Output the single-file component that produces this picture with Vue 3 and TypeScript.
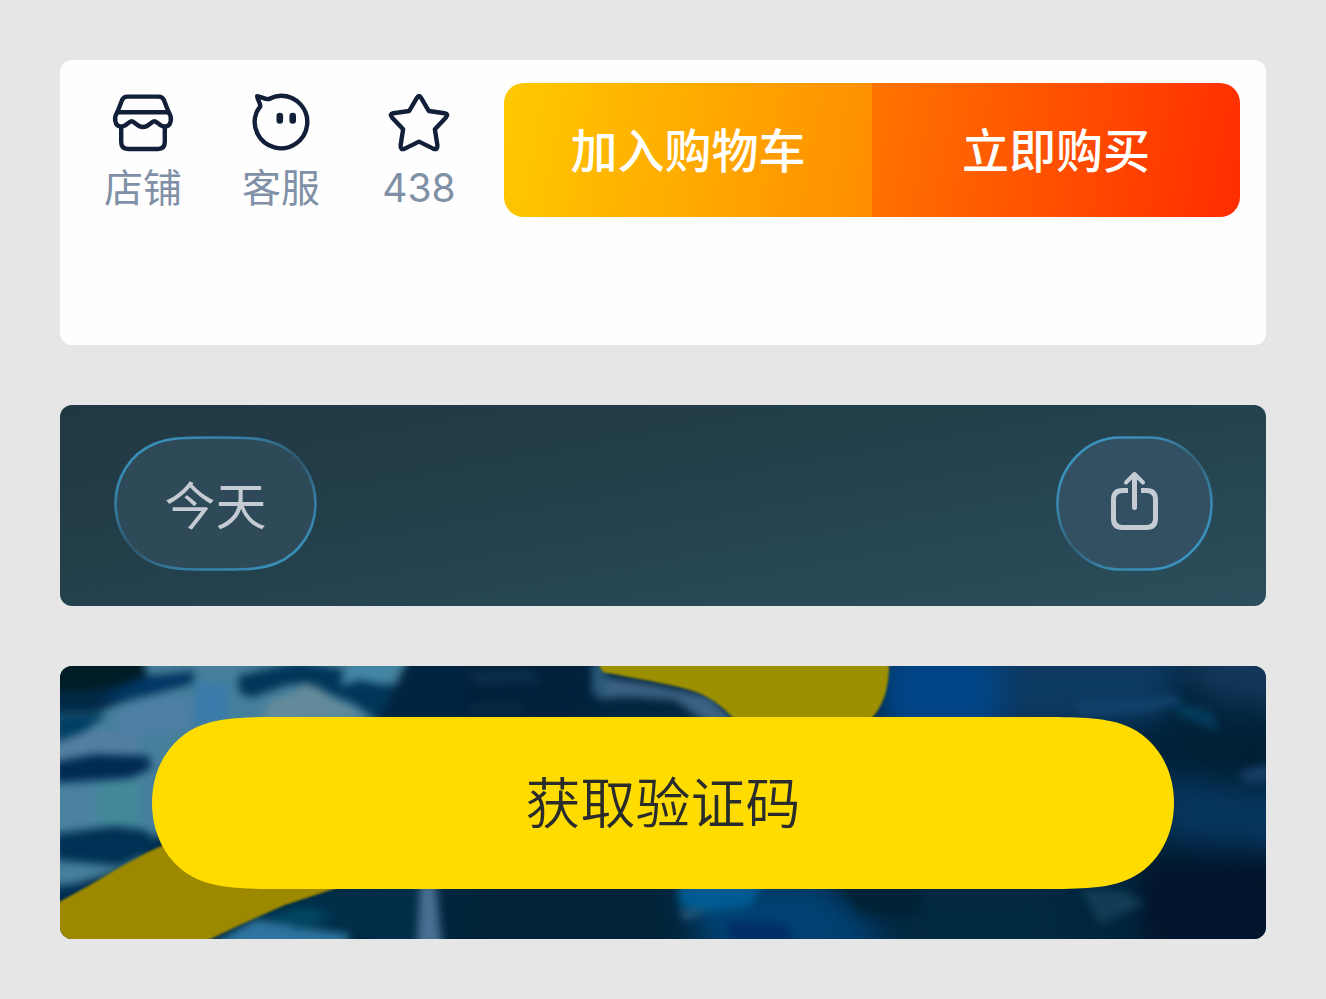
<script setup lang="ts">
import { ref } from 'vue'

type IconName = 'shop' | 'service' | 'favorite'

interface Shortcut {
  icon: IconName
  label: string
}

const shortcuts = ref<Shortcut[]>([
  { icon: 'shop', label: '店铺' },
  { icon: 'service', label: '客服' },
  { icon: 'favorite', label: '438' },
])
</script>

<template>
  <main class="page">
    <section class="panel shop-bar">
      <nav class="shortcuts">
        <button v-for="item in shortcuts" :key="item.icon" type="button" class="shortcut">
          <svg class="shortcut-icon" viewBox="0 0 64 60" aria-hidden="true">
            <g v-if="item.icon === 'shop'">
              <path d="M6.3 19.3 11 7.2Q12.5 3.6 16.4 3.6H47.6Q51.5 3.6 53 7.2L57.7 19.3Z" />
              <path d="M6.3 19.3C2.8 24 3.2 33.6 10.2 33.6C15.5 33.6 17.5 28.2 20.7 28.2C24 28.2 25.5 34 32 34C38.5 34 40 28.2 43.3 28.2C46.5 28.2 48.5 33.6 53.8 33.6C60.8 33.6 61.2 24 57.7 19.3" />
              <path d="M10.2 33.6V49Q10.2 56 17.2 56H46.8Q53.8 56 53.8 49V33.6" />
            </g>
            <g v-else-if="item.icon === 'service'">
              <path d="M20 6C25 3.2 28 2.7 32 2.7A26.3 26.3 0 1 1 7.6 19.2C8.8 16 11 14.5 11.3 13.2C11.3 9.5 8.6 7.5 8.2 3.2C12 3.5 16.2 6.8 20 6Z" />
              <rect class="solid" x="27.5" y="19.8" width="6.6" height="11" rx="3.3" />
              <rect class="solid" x="40.4" y="19.8" width="6.6" height="11" rx="3.3" />
            </g>
            <path
              v-else
              d="M29.9 4.8Q32 1.2 34.1 4.8L41.8 18L57.6 20.2Q62 21 59 24.4L47.9 36.3L50.4 52.3Q50.8 57.4 46.2 55.6L32 48.6L17.8 55.6Q13.2 57.4 13.6 52.3L16.1 36.3L5 24.4Q2 21 6.4 20.2L22.2 18Z"
            />
          </svg>
          <span class="shortcut-label">{{ item.label }}</span>
        </button>
      </nav>
      <div class="purchase">
        <button type="button" class="action add">加入购物车</button>
        <button type="button" class="action buy">立即购买</button>
      </div>
    </section>

    <section class="panel glass-bar">
      <button type="button" class="glass today">
        <svg class="glass-shape" viewBox="0 0 203 135" aria-hidden="true">
          <defs>
            <linearGradient id="rim-today" x1="0.1" y1="0" x2="0.9" y2="1">
              <stop offset="0" stop-color="#3a94bf" />
              <stop offset="0.28" stop-color="#347ca2" />
              <stop offset="0.5" stop-color="#30566b" />
              <stop offset="0.72" stop-color="#347ca2" />
              <stop offset="1" stop-color="#3a94bf" />
            </linearGradient>
          </defs>
          <path
            d="M101.5 1.5C72 1.5 56 1.5 40 8C16 18 1.5 42 1.5 67.5S16 117 40 127C56 133.5 72 133.5 101.5 133.5S147 133.5 163 127C187 117 201.5 93 201.5 67.5S187 18 163 8C147 1.5 131 1.5 101.5 1.5Z"
            fill="#2e4a59"
            stroke="url(#rim-today)"
            stroke-width="2.6"
          />
        </svg>
        <span class="glass-label">今天</span>
      </button>
      <button type="button" class="glass share" aria-label="分享">
        <svg class="glass-shape" viewBox="0 0 157 135" aria-hidden="true">
          <defs>
            <linearGradient id="rim-share" x1="0.1" y1="0" x2="0.9" y2="1">
              <stop offset="0" stop-color="#3b99c8" />
              <stop offset="0.28" stop-color="#3887ae" />
              <stop offset="0.5" stop-color="#345f76" />
              <stop offset="0.72" stop-color="#3887ae" />
              <stop offset="1" stop-color="#3b99c8" />
            </linearGradient>
          </defs>
          <path
            d="M64 1.5H93C127 1.5 155.5 31 155.5 67.5S127 133.5 93 133.5H64C30 133.5 1.5 104 1.5 67.5S30 1.5 64 1.5Z"
            fill="#325062"
            stroke="url(#rim-share)"
            stroke-width="2.6"
          />
          <g fill="none" stroke="#c5cbd2">
            <path d="M72 54.500H66.500Q57.500 54.500 57.500 63.500V82.500Q57.500 91.500 66.500 91.500H90.500Q99.500 91.500 99.500 82.500V63.500Q99.500 54.500 90.500 54.500H85" stroke-width="5" />
            <path d="M78.500 39V71.500" stroke-width="5" stroke-linecap="round" />
            <path d="M70 46.500 78.500 38 87 46.500" stroke-width="4" stroke-linecap="round" stroke-linejoin="round" />
          </g>
        </svg>
      </button>
    </section>

    <section class="panel verify">
      <svg class="scene" viewBox="0 0 1206 273" preserveAspectRatio="none" aria-hidden="true">
        <defs>
          <filter id="soft" x="-10%" y="-10%" width="120%" height="120%" color-interpolation-filters="sRGB">
            <feGaussianBlur stdDeviation="4" />
          </filter>
          <filter id="haze" x="-20%" y="-20%" width="140%" height="140%" color-interpolation-filters="sRGB">
            <feGaussianBlur stdDeviation="14" />
          </filter>
          <filter id="edge" x="-5%" y="-5%" width="110%" height="110%" color-interpolation-filters="sRGB">
            <feGaussianBlur stdDeviation="1" />
          </filter>
        </defs>
        <rect width="1206" height="273" fill="#02263f" />
        <g filter="url(#haze)">
          <path d="M820-20H940V70H820Z" fill="#004587" />
          <path d="M940-20H1120L1100 55 940 60Z" fill="#0d3a63" />
          <path d="M1110-20H1230V40L1150 30Z" fill="#15375a" />
          <path d="M1070 60H1230V120L1120 100Z" fill="#002035" />
          <path d="M1100 115 1230 125V185L1100 170Z" fill="#07355e" />
          <path d="M1080 190H1230V290H1080Z" fill="#02142b" />
          <path d="M840 220H1000V290H840Z" fill="#022a40" />
          <path d="M620 215H760L840 290H650Z" fill="#004273" />
          <path d="M400 215H610V290H400Z" fill="#012438" />
          <path d="M350-20H530V55H340Z" fill="#02203c" />
        </g>
        <g filter="url(#soft)">
          <path d="M-10-10H350L320 55 150 90 80 200-10 225Z" fill="#457f9b" />
          <path d="M55 45 110 30 145 40 120 65 60 72Z" fill="#4f7fa6" />
          <path d="M135 15 170 20 168 55 135 60Z" fill="#397baa" />
          <path d="M-5 75 40 62 80 72 75 88-5 95Z" fill="#557fa0" />
          <path d="M-5 122H38V160H-5Z" fill="#4b82a0" />
          <path d="M38 120 80 112V158H38Z" fill="#438999" />
          <path d="M-10-10H80L88 10 135 5 132 18 65 35 35 47-10 48Z" fill="#002945" />
          <path d="M-10-10H84V12L30 25H-10Z" fill="#001d27" />
          <path d="M80 12 133 6 130 18 70 33 40 34Z" fill="#003663" />
          <path d="M-5 50 48 48 25 65-5 77Z" fill="#003e63" />
          <path d="M-5 96 35 88 88 90 92 102 70 112-5 117Z" fill="#002954" />
          <path d="M-5 168 55 160 85 164 105 180 60 200-5 194Z" fill="#003154" />
          <path d="M-5 220 38 216 20 235-5 240Z" fill="#002d50" />
          <path d="M178 10 240-5 290 5 335 20 318 55 292 37 265 26 230 18 190 32 179 26Z" fill="#013658" />
          <path d="M284 5 302-6H345L324 19 300 14 280 20Z" fill="#4486a4" />
          <path d="M210 34 232 28 242 16 260 22 275 34 310 50 200 58Z" fill="#638b9b" />
          <path d="M350-10H405V60H315Z" fill="#012440" />
          <path d="M405 5 475 4 480 15 420 18Z" fill="#0b2f4a" />
          <path d="M410 40 460 38 465 46 410 48Z" fill="#0a2d47" />
          <path d="M540 10 590 18 650 30 680 60H650L615 34 570 31 538 33Z" fill="#3c6283" />
          <path d="M532-5 548-5 545 28 532 28Z" fill="#285a78" />
          <path d="M190 250 265 222 360 218 390 285H320L300 268 240 262Z" fill="#002d48" />
          <path d="M140 285 195 253 245 262 290 268 285 285Z" fill="#2e749e" />
          <path d="M205 250 245 240 275 250 240 264Z" fill="#004560" />
          <path d="M360 215H376L382 285H357Z" fill="#486f91" />
          <path d="M618 215H705L690 240 650 246 620 240Z" fill="#005b91" />
          <path d="M619 244 650 245 625 254Z" fill="#2d5d7c" />
          <path d="M668 255 725 257 735 280H670Z" fill="#002e65" />
          <path d="M775 215H860V250L800 245Z" fill="#002236" />
          <path d="M1015 36 1080 33 1115 28 1122 38 1080 46 1020 50Z" fill="#12416b" />
          <path d="M1115 38 1150 45 1160 65 1120 50Z" fill="#053c5c" />
          <path d="M1180 105 1210 98V116L1185 117Z" fill="#183e66" />
          <path d="M1020 222 1065 225 1085 238 1040 258Z" fill="#123c55" />
        </g>
        <g filter="url(#edge)">
          <path d="M-10 241 30 219 62 200 88 186 115 174 300 210 277 222 225 239 180 259 140 278H-10Z" fill="#9c8900" />
          <path d="M534-10 543 6C570 12 630 20 647 31Q664 40 678 58H806C824 42 830 22 829-10Z" fill="#9c8f00" />
        </g>
      </svg>
      <button type="button" class="code-button">
        <span class="code-shape" aria-hidden="true">
          <svg class="cap" viewBox="0 0 140 172">
            <path d="M140 0C96 0 72 0 50 8C20 19 0 49 0 86S20 153 50 164C72 172 96 172 140 172Z" />
          </svg>
          <span class="code-middle"></span>
          <svg class="cap" viewBox="0 0 140 172">
            <path d="M0 0C44 0 68 0 90 8C120 19 140 49 140 86S120 153 90 164C68 172 44 172 0 172Z" />
          </svg>
        </span>
        <span class="code-label">获取验证码</span>
      </button>
    </section>
  </main>
</template>

<style>
body {
  margin: 0;
  background: #e6e6e6;
}
</style>

<style scoped>
.page {
  display: flex;
  flex-direction: column;
  gap: 60px;
  padding: 60px;
  font-family: Inter, 'Noto Sans CJK SC', sans-serif;
}

button {
  box-sizing: border-box;
  margin: 0;
  padding: 0;
  border: 0;
  background: none;
  font-family: inherit;
  cursor: pointer;
}

svg {
  display: block;
}

.panel {
  box-sizing: border-box;
  border-radius: 12px;
  overflow: hidden;
}

.shop-bar {
  display: flex;
  align-items: flex-start;
  gap: 16px;
  padding: 23px 26px 128px 14px;
  background: #fefefe;
}

.shortcuts {
  display: flex;
}

.shortcut {
  display: flex;
  flex-direction: column;
  align-items: center;
  gap: 12px;
  width: 138px;
  padding-top: 10px;
}

.shortcut-icon {
  width: 64px;
  height: 60px;
  fill: none;
  stroke: #111f38;
  stroke-width: 4.4;
  stroke-linejoin: round;
  stroke-linecap: round;
}

.solid {
  fill: #111f38;
  stroke: none;
}

.shortcut-label {
  font-size: 39px;
  line-height: 46px;
  color: #8090a6;
}

.purchase {
  display: flex;
  flex: 1;
  border-radius: 20px;
  overflow: hidden;
}

.action {
  flex: 1;
  height: 134px;
  padding-top: 2px;
  color: #fff;
  font-size: 47px;
  font-weight: 500;
  line-height: 60px;
}

.add {
  background: linear-gradient(100deg, #ffc900, #ff8d00);
}

.buy {
  background: linear-gradient(100deg, #ff7400, #ff2c00);
}

.glass-bar {
  display: flex;
  justify-content: space-between;
  padding: 31px 53px 35px 54px;
  background: linear-gradient(170deg, #213843, #223f4a 40%, #2b4f5c);
}

.glass {
  position: relative;
  display: flex;
  align-items: center;
  justify-content: center;
  height: 135px;
  padding-top: 6px;
}

.today {
  width: 203px;
}

.share {
  width: 157px;
}

.glass-shape {
  position: absolute;
  inset: 0;
  width: 100%;
  height: 100%;
}

.glass-label {
  position: relative;
  color: #c5cbd2;
  font-size: 51px;
  line-height: 64px;
}

.verify {
  position: relative;
  padding: 51px 92px 50px;
}

.scene {
  position: absolute;
  inset: 0;
  width: 100%;
  height: 100%;
}

.code-button {
  position: relative;
  display: flex;
  align-items: center;
  justify-content: center;
  width: 100%;
  height: 172px;
}

.code-shape {
  position: absolute;
  inset: 0;
  display: flex;
}

.cap {
  width: 140px;
  height: 172px;
  fill: #ffdc00;
}

.code-middle {
  flex: 1;
  background: #ffdc00;
}

.code-label {
  position: relative;
  color: #292c2b;
  font-size: 55px;
  font-weight: 350;
  line-height: 72px;
}
</style>
